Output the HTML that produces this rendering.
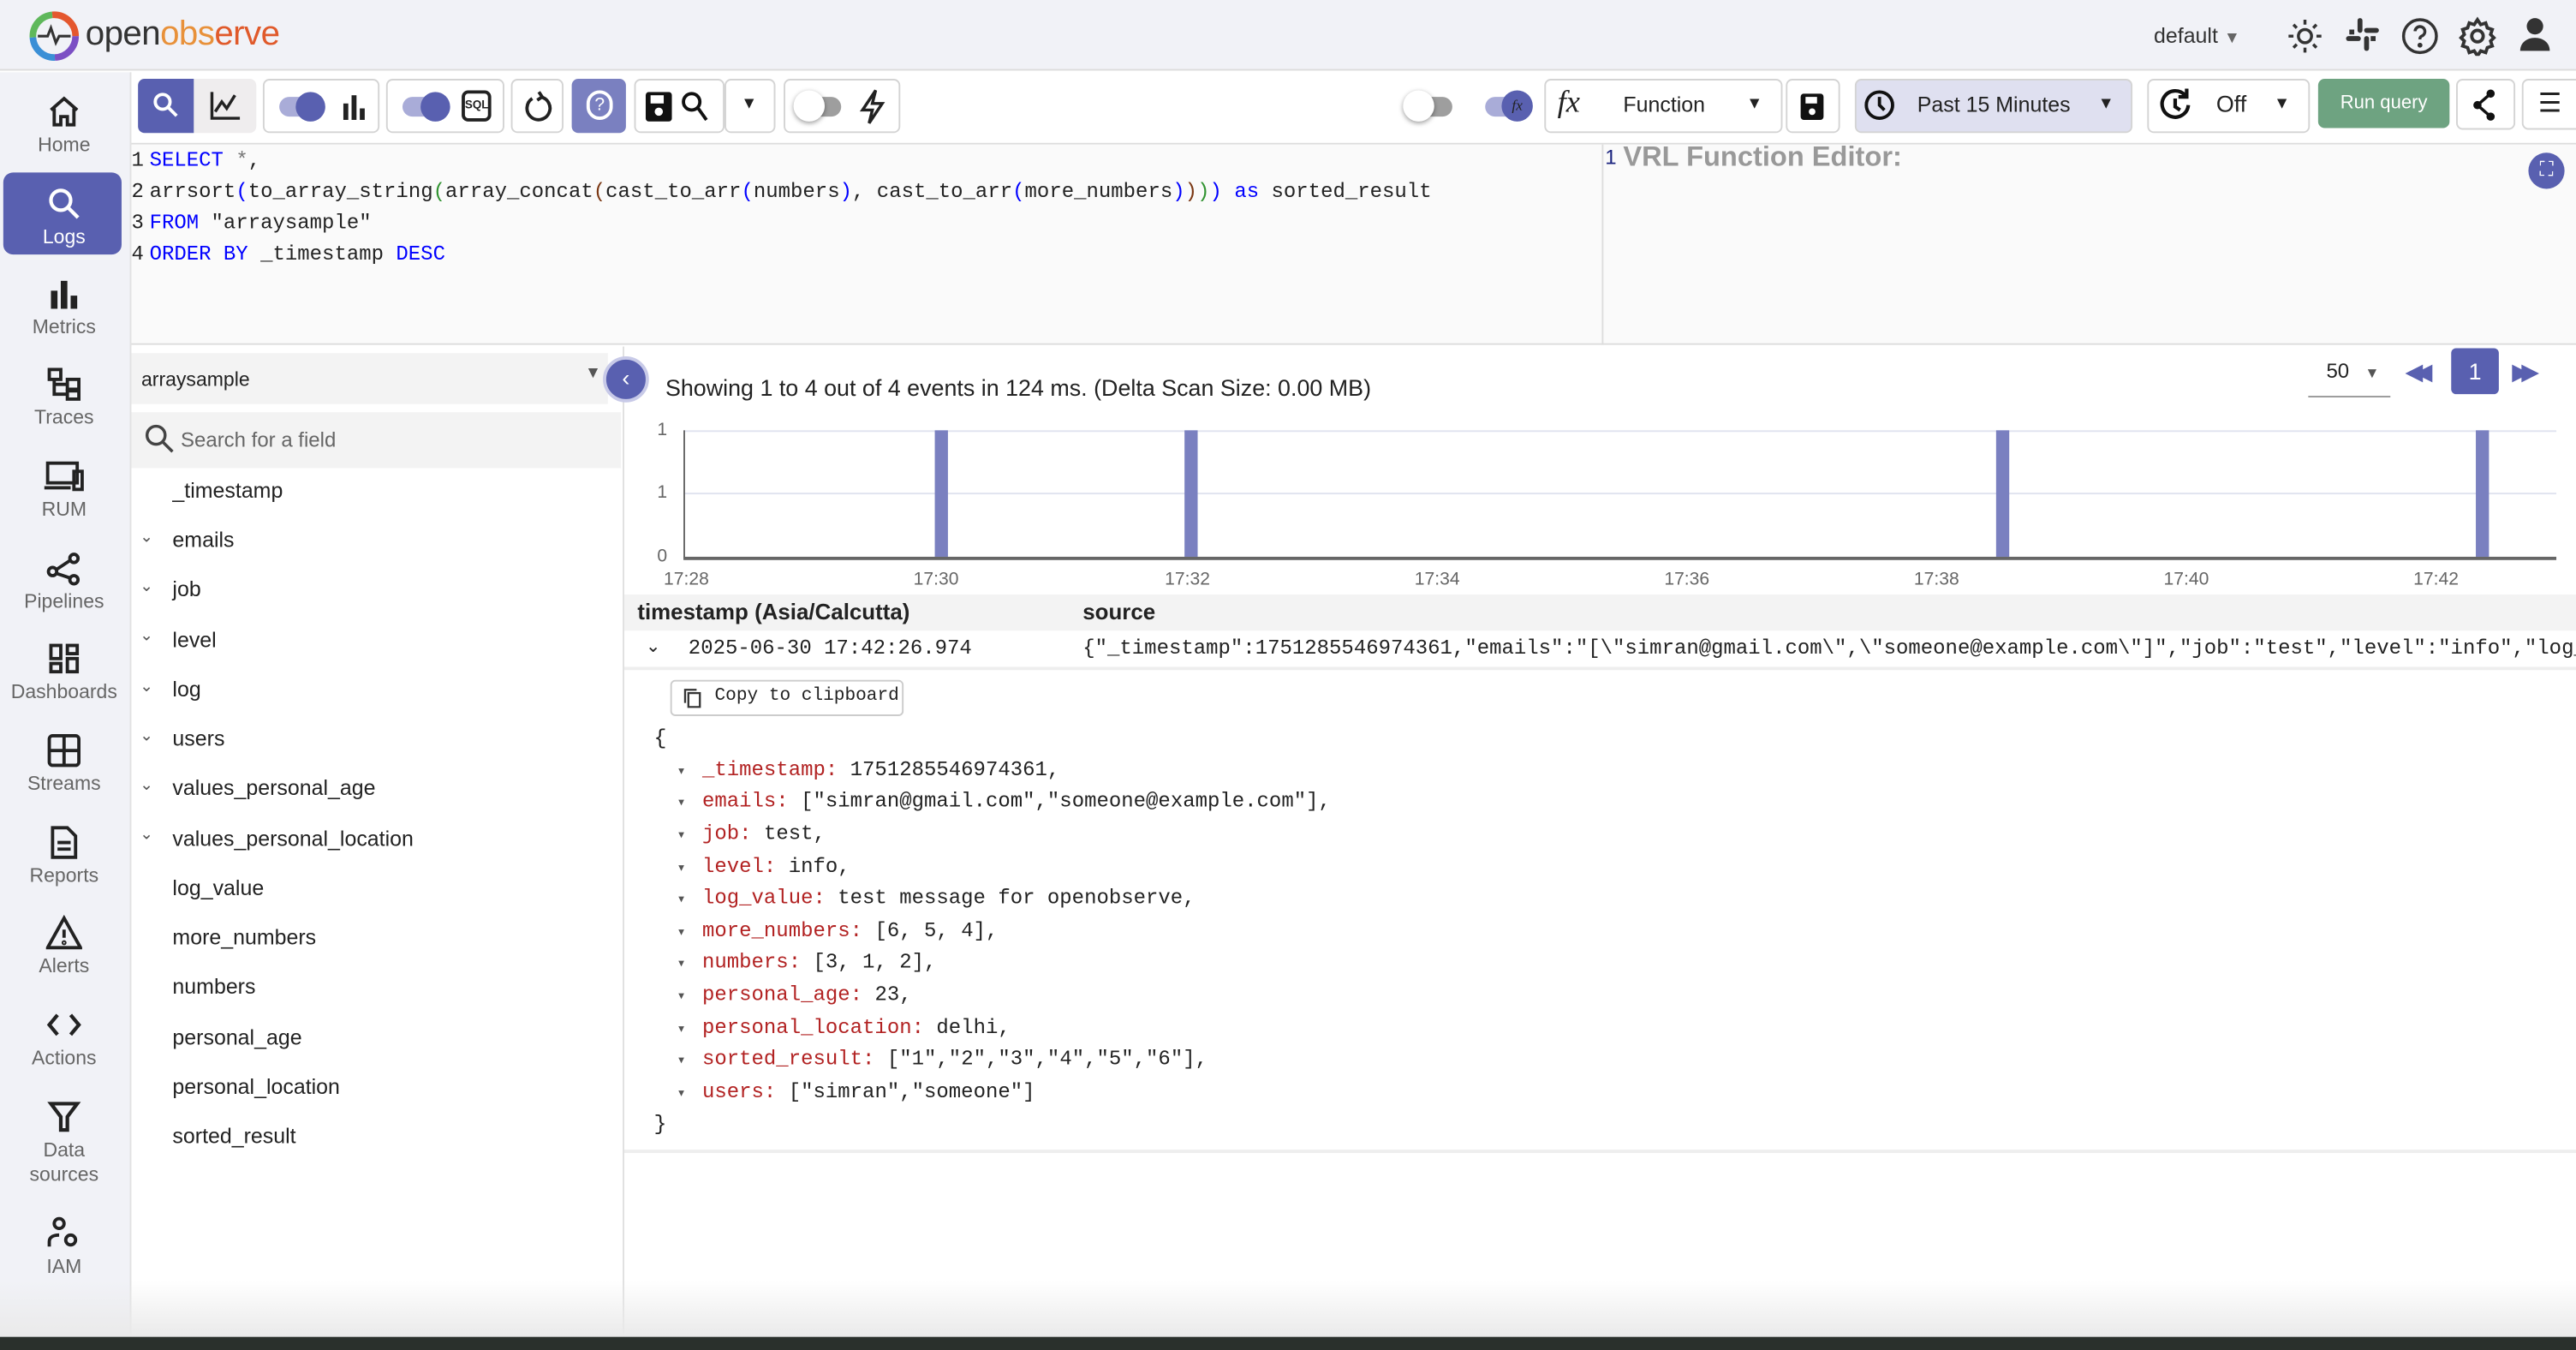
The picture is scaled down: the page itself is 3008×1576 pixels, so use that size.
<!DOCTYPE html>
<html><head><meta charset="utf-8"><style>
*{box-sizing:border-box;margin:0;padding:0}
html,body{width:3008px;height:1576px;overflow:hidden;background:#1d2420}
#w{position:absolute;left:0;top:0;width:1568px;height:822px;transform:scale(1.9184,1.9173);transform-origin:0 0;font-family:"Liberation Sans",sans-serif;color:#222;background:#fff;overflow:hidden}
.a{position:absolute}
.mono{font-family:"Liberation Mono","DejaVu Sans Mono",monospace}
.nav{position:absolute;left:0;width:78px;text-align:center;font-size:12px;color:#666}
.nav svg{display:block;margin:0 auto 2px}
.btn{position:absolute;top:48px;height:33px;border:1px solid #d4d4d4;border-radius:4px;background:#fff}
.fld{position:absolute;left:105px;font-size:13px;color:#222}
.chev{position:absolute;left:85px;font-size:10px;color:#555}
.js{font-size:12.5px;position:absolute;left:412px}
.js b{font-weight:normal;color:#555;font-size:9px;margin-right:10px}
.k{color:#b22222}
.ln{display:inline-block;width:11px}
</style></head><body><div id="w">
<!-- header -->
<div class="a" style="left:0;top:0;width:1568px;height:43px;background:#f1f2f7;border-bottom:1px solid #ddd"></div>
<svg class="a" style="left:17px;top:6px" width="32" height="32" viewBox="0 0 32 32"><circle cx="16" cy="16" r="13" fill="none" stroke="#7b4fc4" stroke-width="4" stroke-dasharray="20 62"/><circle cx="16" cy="16" r="13" fill="none" stroke="#3a8fd6" stroke-width="4" stroke-dasharray="20 62" stroke-dashoffset="-20"/><circle cx="16" cy="16" r="13" fill="none" stroke="#5fb85b" stroke-width="4" stroke-dasharray="20 62" stroke-dashoffset="-40"/><circle cx="16" cy="16" r="13" fill="none" stroke="#e4572e" stroke-width="4" stroke-dasharray="22 62" stroke-dashoffset="-60"/><path d="M6 16h6l2-5 3 9 2-4h7" fill="none" stroke="#333" stroke-width="1.6"/></svg>
<div class="a" style="left:52px;top:9px;font-size:21px;letter-spacing:-.3px"><span style="color:#333">open</span><span style="color:#e8913a">obs</span><span style="color:#e05a2b">erve</span></div>
<div class="a" style="left:1311px;top:14px;font-size:13px;color:#333">default <span style="color:#666;font-size:10px">▼</span></div>
<svg class="a" style="left:1391px;top:10px" width="24" height="24" viewBox="0 0 24 24" fill="none" stroke="#333" stroke-width="1.8"><circle cx="12" cy="12" r="4"/><path d="M12 2v3M12 19v3M2 12h3M19 12h3M5 5l2 2M17 17l2 2M5 19l2-2M17 7l2-2"/></svg>
<svg class="a" style="left:1427px;top:10px" width="22" height="22" viewBox="0 0 22 22" fill="#333"><rect x="8" y="1" width="3" height="9" rx="1.5"/><rect x="12" y="12" width="3" height="9" rx="1.5"/><rect x="1" y="12" width="9" height="3" rx="1.5"/><rect x="12" y="7" width="9" height="3" rx="1.5"/><rect x="3" y="8" width="3" height="3"/><rect x="16" y="12" width="3" height="3"/></svg>
<svg class="a" style="left:1461px;top:10px" width="24" height="24" viewBox="0 0 24 24" fill="none" stroke="#333" stroke-width="1.8"><circle cx="12" cy="12" r="10"/><path d="M9 9a3 3 0 1 1 4 3c-1 .5-1 1-1 2"/><circle cx="12" cy="17.5" r=".6" fill="#333"/></svg>
<svg class="a" style="left:1496px;top:10px" width="24" height="24" viewBox="0 0 24 24" fill="none" stroke="#333" stroke-width="2"><circle cx="12" cy="12" r="3.5"/><path d="M12 2l2 3 3-1 1 3 3 1-1 3 2 2-2 2 1 3-3 1-1 3-3-1-2 3-2-3-3 1-1-3-3-1 1-3-2-2 2-2-1-3 3-1 1-3 3 1z"/></svg>
<svg class="a" style="left:1532px;top:10px" width="22" height="22" viewBox="0 0 22 22" fill="#333"><circle cx="11" cy="6" r="5"/><path d="M2 21c0-5 4-8 9-8s9 3 9 8z"/></svg>
<!-- sidebar -->
<div class="a" style="left:0;top:44px;width:80px;height:770px;background:#f1f2f7;border-right:1px solid #e2e2e2"></div>
<div class="a" style="left:2px;top:105px;width:72px;height:50px;background:#5960b0;border-radius:6px"></div>
<div class="nav" style="top:57px"><svg width="22" height="22" viewBox="0 0 22 22" fill="none" stroke="#222" stroke-width="2"><path d="M3 10l8-7 8 7M5 9v10h4v-5h4v5h4V9"/></svg>Home</div>
<div class="nav" style="top:113px;color:#fff"><svg width="22" height="22" viewBox="0 0 22 22" fill="none" stroke="#fff" stroke-width="2.2"><circle cx="9" cy="9" r="6"/><path d="M13.5 13.5l6 6"/></svg>Logs</div>
<div class="nav" style="top:168px"><svg width="22" height="22" viewBox="0 0 22 22" fill="#222"><rect x="3" y="9" width="4" height="11"/><rect x="9" y="3" width="4" height="17"/><rect x="15" y="12" width="4" height="8"/></svg>Metrics</div>
<div class="nav" style="top:223px"><svg width="22" height="22" viewBox="0 0 22 22" fill="none" stroke="#222" stroke-width="2"><rect x="2" y="2" width="7" height="6"/><rect x="13" y="8" width="7" height="6"/><rect x="13" y="15" width="7" height="5"/><path d="M5 8v9h8M5 11h8"/></svg>Traces</div>
<div class="nav" style="top:279px"><svg width="26" height="22" viewBox="0 0 26 22" fill="none" stroke="#222" stroke-width="2"><rect x="3" y="3" width="18" height="12"/><path d="M1 18h16"/><rect x="19" y="8" width="5" height="11"/></svg>RUM</div>
<div class="nav" style="top:335px"><svg width="22" height="22" viewBox="0 0 22 22" fill="none" stroke="#222" stroke-width="2"><circle cx="4" cy="13" r="2.5"/><circle cx="17" cy="5" r="2.5"/><circle cx="17" cy="18" r="2.5"/><path d="M6 12l9-6M6 14l9 3"/></svg>Pipelines</div>
<div class="nav" style="top:390px"><svg width="22" height="22" viewBox="0 0 22 22" fill="none" stroke="#222" stroke-width="2"><rect x="3" y="3" width="6" height="8"/><rect x="13" y="3" width="6" height="5"/><rect x="3" y="14" width="6" height="5"/><rect x="13" y="11" width="6" height="8"/></svg>Dashboards</div>
<div class="nav" style="top:446px"><svg width="22" height="22" viewBox="0 0 22 22" fill="none" stroke="#222" stroke-width="2"><rect x="2" y="2" width="18" height="18" rx="2"/><path d="M2 11h18M11 2v18"/></svg>Streams</div>
<div class="nav" style="top:502px"><svg width="22" height="22" viewBox="0 0 22 22" fill="none" stroke="#222" stroke-width="2"><path d="M4 2h9l5 5v13H4z"/><path d="M7 11h8M7 15h8"/></svg>Reports</div>
<div class="nav" style="top:557px"><svg width="22" height="22" viewBox="0 0 22 22" fill="none" stroke="#222" stroke-width="2"><path d="M11 2L1 20h20z"/><path d="M11 9v5"/><circle cx="11" cy="17" r=".5"/></svg>Alerts</div>
<div class="nav" style="top:613px"><svg width="22" height="22" viewBox="0 0 22 22" fill="none" stroke="#222" stroke-width="2.2"><path d="M7 5l-5 6 5 6M15 5l5 6-5 6"/></svg>Actions</div>
<div class="nav" style="top:669px;line-height:15px"><svg width="22" height="22" viewBox="0 0 22 22" fill="none" stroke="#222" stroke-width="2.2"><path d="M3 3h16l-6 8v8h-4v-8z"/></svg>Data<br>sources</div>
<div class="nav" style="top:740px"><svg width="22" height="22" viewBox="0 0 22 22" fill="none" stroke="#222" stroke-width="2"><circle cx="8" cy="5" r="3"/><path d="M2 19v-3c0-3 3-4 6-4"/><circle cx="15" cy="15" r="3"/></svg>IAM</div>
<!-- toolbar -->
<div class="a" style="left:80px;top:44px;width:1488px;height:44px;background:#fff;border-bottom:1px solid #ddd"></div>
<div class="a" style="left:84px;top:48px;width:34px;height:33px;background:#5960b0;border-radius:4px 0 0 4px"></div>
<svg class="a" style="left:92px;top:55px" width="18" height="18" viewBox="0 0 18 18" fill="none" stroke="#fff" stroke-width="2"><circle cx="7" cy="7" r="4.5"/><path d="M10.5 10.5l5 5"/></svg>
<div class="a" style="left:118px;top:48px;width:38px;height:33px;background:#efedee;border-radius:0 4px 4px 0"></div>
<svg class="a" style="left:127px;top:55px" width="20" height="18" viewBox="0 0 20 18" fill="none" stroke="#222" stroke-width="1.8"><path d="M2 1v16h17M4 13l4-6 3 4 5-8"/></svg>
<div class="btn" style="left:160px;width:71px"></div>
<div class="a" style="left:170px;top:59px;width:26px;height:12px;border-radius:6px;background:#a9acd8"></div><div class="a" style="left:180px;top:56px;width:18px;height:18px;border-radius:9px;background:#5960b0"></div>
<svg class="a" style="left:206px;top:56px" width="18" height="18" viewBox="0 0 18 18" fill="#222"><rect x="3" y="7" width="3" height="10"/><rect x="8" y="2" width="3" height="15"/><rect x="13" y="10" width="3" height="7"/></svg>
<div class="btn" style="left:235px;width:72px"></div>
<div class="a" style="left:245px;top:59px;width:26px;height:12px;border-radius:6px;background:#a9acd8"></div><div class="a" style="left:256px;top:56px;width:18px;height:18px;border-radius:9px;background:#5960b0"></div>
<div class="a" style="left:281px;top:55px;width:18px;height:19px;border:2px solid #222;border-radius:4px;font-size:7px;font-weight:bold;text-align:center;line-height:15px">SQL</div>
<div class="btn" style="left:311px;width:32px"></div>
<svg class="a" style="left:318px;top:55px" width="18" height="20" viewBox="0 0 18 20" fill="none" stroke="#222" stroke-width="2"><path d="M6 5a7 7 0 1 0 5-1"/><path d="M10 1l2 3-3 2"/></svg>
<div class="a" style="left:348px;top:48px;width:33px;height:33px;background:#7a80c0;border-radius:4px"></div>
<div class="a" style="left:357px;top:55px;width:16px;height:18px;border:2px solid #fff;border-radius:9px;color:#fff;font-size:11px;text-align:center;line-height:14px">?</div>
<div class="btn" style="left:386px;width:55px"></div><div class="btn" style="left:441px;width:31px"></div>
<svg class="a" style="left:393px;top:56px" width="16" height="18" viewBox="0 0 16 18"><rect x="0" y="0" width="16" height="18" rx="2" fill="#111"/><rect x="3" y="2" width="8" height="5" fill="#fff"/><circle cx="8" cy="12" r="2.5" fill="#fff"/></svg>
<svg class="a" style="left:414px;top:55px" width="18" height="20" viewBox="0 0 18 20" fill="none" stroke="#111" stroke-width="2"><circle cx="7" cy="7" r="5"/><path d="M11 11l5 7"/></svg>
<div class="a" style="left:451px;top:58px;font-size:10px">▼</div>
<div class="btn" style="left:477px;width:71px"></div>
<div class="a" style="left:486px;top:59px;width:26px;height:12px;border-radius:6px;background:#9e9e9e"></div><div class="a" style="left:483px;top:55px;width:19px;height:19px;border-radius:10px;background:#fff;box-shadow:0 1px 3px rgba(0,0,0,.4)"></div>
<svg class="a" style="left:522px;top:54px" width="18" height="22" viewBox="0 0 18 22" fill="none" stroke="#222" stroke-width="1.8"><path d="M11 1L3 13h6l-2 8 8-12H9z"/></svg>
<div class="a" style="left:858px;top:59px;width:26px;height:12px;border-radius:6px;background:#9e9e9e"></div><div class="a" style="left:854px;top:55px;width:19px;height:19px;border-radius:10px;background:#fff;box-shadow:0 1px 3px rgba(0,0,0,.4)"></div>
<div class="a" style="left:904px;top:59px;width:26px;height:12px;border-radius:6px;background:#a9acd8"></div><div class="a" style="left:914px;top:55px;width:19px;height:19px;border-radius:10px;background:#5960b0;color:#222;font-size:9px;font-style:italic;text-align:center;line-height:19px;font-family:'Liberation Serif'">fx</div>
<div class="btn" style="left:940px;width:145px"></div>
<div class="a" style="left:948px;top:52px;font-size:19px;font-style:italic;font-family:'Liberation Serif',serif">fx</div>
<div class="a" style="left:988px;top:56px;font-size:13px">Function</div><div class="a" style="left:1063px;top:58px;font-size:10px">▼</div>
<div class="btn" style="left:1087px;width:33px"></div>
<svg class="a" style="left:1096px;top:57px" width="14" height="16" viewBox="0 0 14 16"><rect width="14" height="16" rx="2" fill="#111"/><rect x="3" y="2" width="7" height="4" fill="#fff"/><circle cx="7" cy="11" r="2" fill="#fff"/></svg>
<div class="btn" style="left:1129px;width:169px;background:#dfe0f0"></div>
<svg class="a" style="left:1134px;top:53px" width="20" height="22" viewBox="0 0 20 22" fill="none" stroke="#111" stroke-width="2"><circle cx="10" cy="11" r="8"/><path d="M10 6v5l3 3"/></svg>
<div class="a" style="left:1167px;top:56px;font-size:13px">Past 15 Minutes</div><div class="a" style="left:1277px;top:58px;font-size:10px">▼</div>
<div class="btn" style="left:1307px;width:99px"></div>
<svg class="a" style="left:1313px;top:53px" width="22" height="22" viewBox="0 0 22 22" fill="none" stroke="#111" stroke-width="2.2"><path d="M17 5a8 8 0 1 0 2 6"/><path d="M18 1v5h-5"/><path d="M11 7v5l3 2"/></svg>
<div class="a" style="left:1349px;top:55px;font-size:14px">Off</div><div class="a" style="left:1384px;top:58px;font-size:10px">▼</div>
<div class="a" style="left:1411px;top:48px;width:80px;height:30px;background:#6ea381;border-radius:4px;color:#fff;font-size:11.5px;text-align:center;line-height:30px">Run query</div>
<div class="btn" style="left:1495px;width:36px;height:31px"></div>
<svg class="a" style="left:1504px;top:54px" width="16" height="20" viewBox="0 0 16 20" fill="#111"><circle cx="12" cy="3" r="2.5"/><circle cx="4" cy="10" r="2.5"/><circle cx="12" cy="17" r="2.5"/><path d="M12 3L4 10l8 7" fill="none" stroke="#111" stroke-width="1.8"/></svg>
<div class="btn" style="left:1535px;width:40px;height:31px"></div>
<div class="a" style="left:1545px;top:53px;font-size:16px">☰</div>
<!-- editors -->
<div class="a" style="left:80px;top:88px;width:1488px;height:122px;background:#fafafa;border-bottom:1px solid #ddd"></div>
<div class="a" style="left:975px;top:88px;width:1px;height:122px;background:#ddd"></div>
<div class="a mono" style="left:80px;top:89px;font-size:12.5px;line-height:19px;white-space:pre"><span class="ln">1</span><span style="color:#00f">SELECT</span> <span style="color:#777">*</span>,
<span class="ln">2</span>arrsort<span style="color:#00f">(</span>to_array_string<span style="color:#319331">(</span>array_concat<span style="color:#7b3814">(</span>cast_to_arr<span style="color:#00f">(</span>numbers<span style="color:#00f">)</span>, cast_to_arr<span style="color:#00f">(</span>more_numbers<span style="color:#00f">)</span><span style="color:#7b3814">)</span><span style="color:#319331">)</span><span style="color:#00f">)</span> <span style="color:#00f">as</span> sorted_result
<span class="ln">3</span><span style="color:#00f">FROM</span> "arraysample"
<span class="ln">4</span><span style="color:#00f">ORDER BY</span> _timestamp <span style="color:#00f">DESC</span></div>
<div class="a" style="left:977px;top:89px;font-size:12.5px;color:#1a237e" >1</div>
<div class="a" style="left:988px;top:86px;font-size:17px;font-weight:bold;color:#999">VRL Function Editor:</div>
<div class="a" style="left:1539px;top:93px;width:22px;height:22px;border-radius:11px;background:#5960b0;color:#fff;font-size:12px;text-align:center;line-height:21px">⛶</div>
<!-- field list -->
<div class="a" style="left:80px;top:211px;width:300px;height:603px;background:#fff;border-right:1px solid #e0e0e0"></div>
<div class="a" style="left:80px;top:215px;width:290px;height:31px;background:#f3f3f3"></div>
<div class="a" style="left:86px;top:224px;font-size:12px">arraysample</div><div class="a" style="left:356px;top:222px;font-size:10px;color:#555">▼</div>
<div class="a" style="left:80px;top:251px;width:298px;height:34px;background:#f3f3f3"></div>
<svg class="a" style="left:88px;top:258px" width="18" height="18" viewBox="0 0 18 18" fill="none" stroke="#444" stroke-width="1.8"><circle cx="7" cy="7" r="5.5"/><path d="M11 11l6 6"/></svg>
<div class="a" style="left:110px;top:261px;font-size:12.5px;color:#666">Search for a field</div>
<div class="fld" style="top:291px">_timestamp</div>
<div class="chev" style="top:322px">⌄</div><div class="fld" style="top:321px">emails</div>
<div class="chev" style="top:352px">⌄</div><div class="fld" style="top:351px">job</div>
<div class="chev" style="top:382px">⌄</div><div class="fld" style="top:382px">level</div>
<div class="chev" style="top:413px">⌄</div><div class="fld" style="top:412px">log</div>
<div class="chev" style="top:443px">⌄</div><div class="fld" style="top:442px">users</div>
<div class="chev" style="top:473px">⌄</div><div class="fld" style="top:472px">values_personal_age</div>
<div class="chev" style="top:503px">⌄</div><div class="fld" style="top:503px">values_personal_location</div>
<div class="fld" style="top:533px">log_value</div>
<div class="fld" style="top:563px">more_numbers</div>
<div class="fld" style="top:593px">numbers</div>
<div class="fld" style="top:624px">personal_age</div>
<div class="fld" style="top:654px">personal_location</div>
<div class="fld" style="top:684px">sorted_result</div>
<!-- results -->
<div class="a" style="left:367px;top:217px;width:28px;height:28px;border-radius:14px;background:#5960b0;border:2px solid #c8cae8;color:#fff;text-align:center;line-height:22px;font-size:14px">‹</div>
<div class="a" style="left:405px;top:228px;font-size:14px">Showing 1 to 4 out of 4 events in 124 ms. (Delta Scan Size: 0.00 MB)</div>
<div class="a" style="left:1416px;top:219px;font-size:12.5px">50 <span style="font-size:9px;color:#555;margin-left:6px">▼</span></div>
<div class="a" style="left:1405px;top:241px;width:50px;height:1px;background:#999"></div>
<div class="a" style="left:1464px;top:218px;font-size:14px;color:#5960b0;letter-spacing:-5px">◀◀</div>
<div class="a" style="left:1492px;top:212px;width:29px;height:28px;background:#5960b0;border-radius:3px;color:#fff;font-size:14px;text-align:center;line-height:28px">1</div>
<div class="a" style="left:1529px;top:218px;font-size:14px;color:#5960b0;letter-spacing:-5px">▶▶</div>
<!-- chart -->
<div class="a" style="left:400px;top:256px;font-size:11px;color:#666">1</div>
<div class="a" style="left:400px;top:294px;font-size:11px;color:#666">1</div>
<div class="a" style="left:400px;top:333px;font-size:11px;color:#666">0</div>
<div class="a" style="left:416px;top:262px;width:1140px;height:1px;background:#e0e3ef"></div>
<div class="a" style="left:416px;top:300px;width:1140px;height:1px;background:#e0e3ef"></div>
<div class="a" style="left:416px;top:262px;width:1px;height:78px;background:#666"></div>
<div class="a" style="left:416px;top:339px;width:1140px;height:2px;background:#666"></div>
<div class="a" style="left:569px;top:262px;width:8px;height:77px;background:#7a80c0"></div>
<div class="a" style="left:721px;top:262px;width:8px;height:77px;background:#7a80c0"></div>
<div class="a" style="left:1215px;top:262px;width:8px;height:77px;background:#7a80c0"></div>
<div class="a" style="left:1507px;top:262px;width:8px;height:77px;background:#7a80c0"></div>
<div class="a" style="left:404px;top:347px;width:1150px;font-size:11px;color:#666">
<span class="a" style="left:0">17:28</span><span class="a" style="left:152px">17:30</span><span class="a" style="left:305px">17:32</span><span class="a" style="left:457px">17:34</span><span class="a" style="left:609px">17:36</span><span class="a" style="left:761px">17:38</span><span class="a" style="left:913px">17:40</span><span class="a" style="left:1065px">17:42</span></div>
<!-- table -->
<div class="a" style="left:380px;top:362px;width:1188px;height:22px;background:#f3f3f3"></div>
<div class="a" style="left:388px;top:365px;font-size:13.5px;font-weight:bold;color:#222;font-weight:600">timestamp (Asia/Calcutta)</div>
<div class="a" style="left:659px;top:365px;font-size:13.5px;font-weight:600">source</div>
<div class="a" style="left:380px;top:406px;width:1188px;height:2px;background:#eee"></div>
<div class="a" style="left:393px;top:387px;font-size:11px">⌄</div>
<div class="a mono" style="left:419px;top:388px;font-size:12.5px">2025-06-30 17:42:26.974</div>
<div class="a mono" style="left:659px;top:388px;font-size:12.5px;white-space:nowrap;width:909px;overflow:hidden">{"_timestamp":1751285546974361,"emails":"[\"simran@gmail.com\",\"someone@example.com\"]","job":"test","level":"info","log_value"</div>
<div class="a" style="left:408px;top:414px;width:142px;height:22px;border:1px solid #ccc;border-radius:3px"></div>
<svg class="a" style="left:416px;top:419px" width="11" height="12" viewBox="0 0 11 12" fill="none" stroke="#333" stroke-width="1.2"><rect x="3" y="3" width="7" height="8.5"/><path d="M1 9V1h7"/></svg>
<div class="a mono" style="left:435px;top:418px;font-size:11px">Copy to clipboard</div>
<div class="a mono" style="left:398px;top:442px;font-size:13px">{</div>
<div class="mono">
<div class="js" style="top:462px"><b>▾</b><span class="k">_timestamp:</span> 1751285546974361,</div>
<div class="js" style="top:481px"><b>▾</b><span class="k">emails:</span> ["simran@gmail.com","someone@example.com"],</div>
<div class="js" style="top:501px"><b>▾</b><span class="k">job:</span> test,</div>
<div class="js" style="top:521px"><b>▾</b><span class="k">level:</span> info,</div>
<div class="js" style="top:540px"><b>▾</b><span class="k">log_value:</span> test message for openobserve,</div>
<div class="js" style="top:560px"><b>▾</b><span class="k">more_numbers:</span> [6, 5, 4],</div>
<div class="js" style="top:579px"><b>▾</b><span class="k">numbers:</span> [3, 1, 2],</div>
<div class="js" style="top:599px"><b>▾</b><span class="k">personal_age:</span> 23,</div>
<div class="js" style="top:619px"><b>▾</b><span class="k">personal_location:</span> delhi,</div>
<div class="js" style="top:638px"><b>▾</b><span class="k">sorted_result:</span> ["1","2","3","4","5","6"],</div>
<div class="js" style="top:658px"><b>▾</b><span class="k">users:</span> ["simran","someone"]</div>
</div>
<div class="a mono" style="left:398px;top:677px;font-size:13px">}</div>
<div class="a" style="left:380px;top:700px;width:1188px;height:2px;background:#eee"></div>
<!-- bottom dark strip -->
<div class="a" style="left:0;top:780px;width:1568px;height:34px;background:linear-gradient(#fff0,#eaeaea)"></div>
<div class="a" style="left:0;top:814px;width:1568px;height:8px;background:#2a302c"></div>
</div></body></html>
